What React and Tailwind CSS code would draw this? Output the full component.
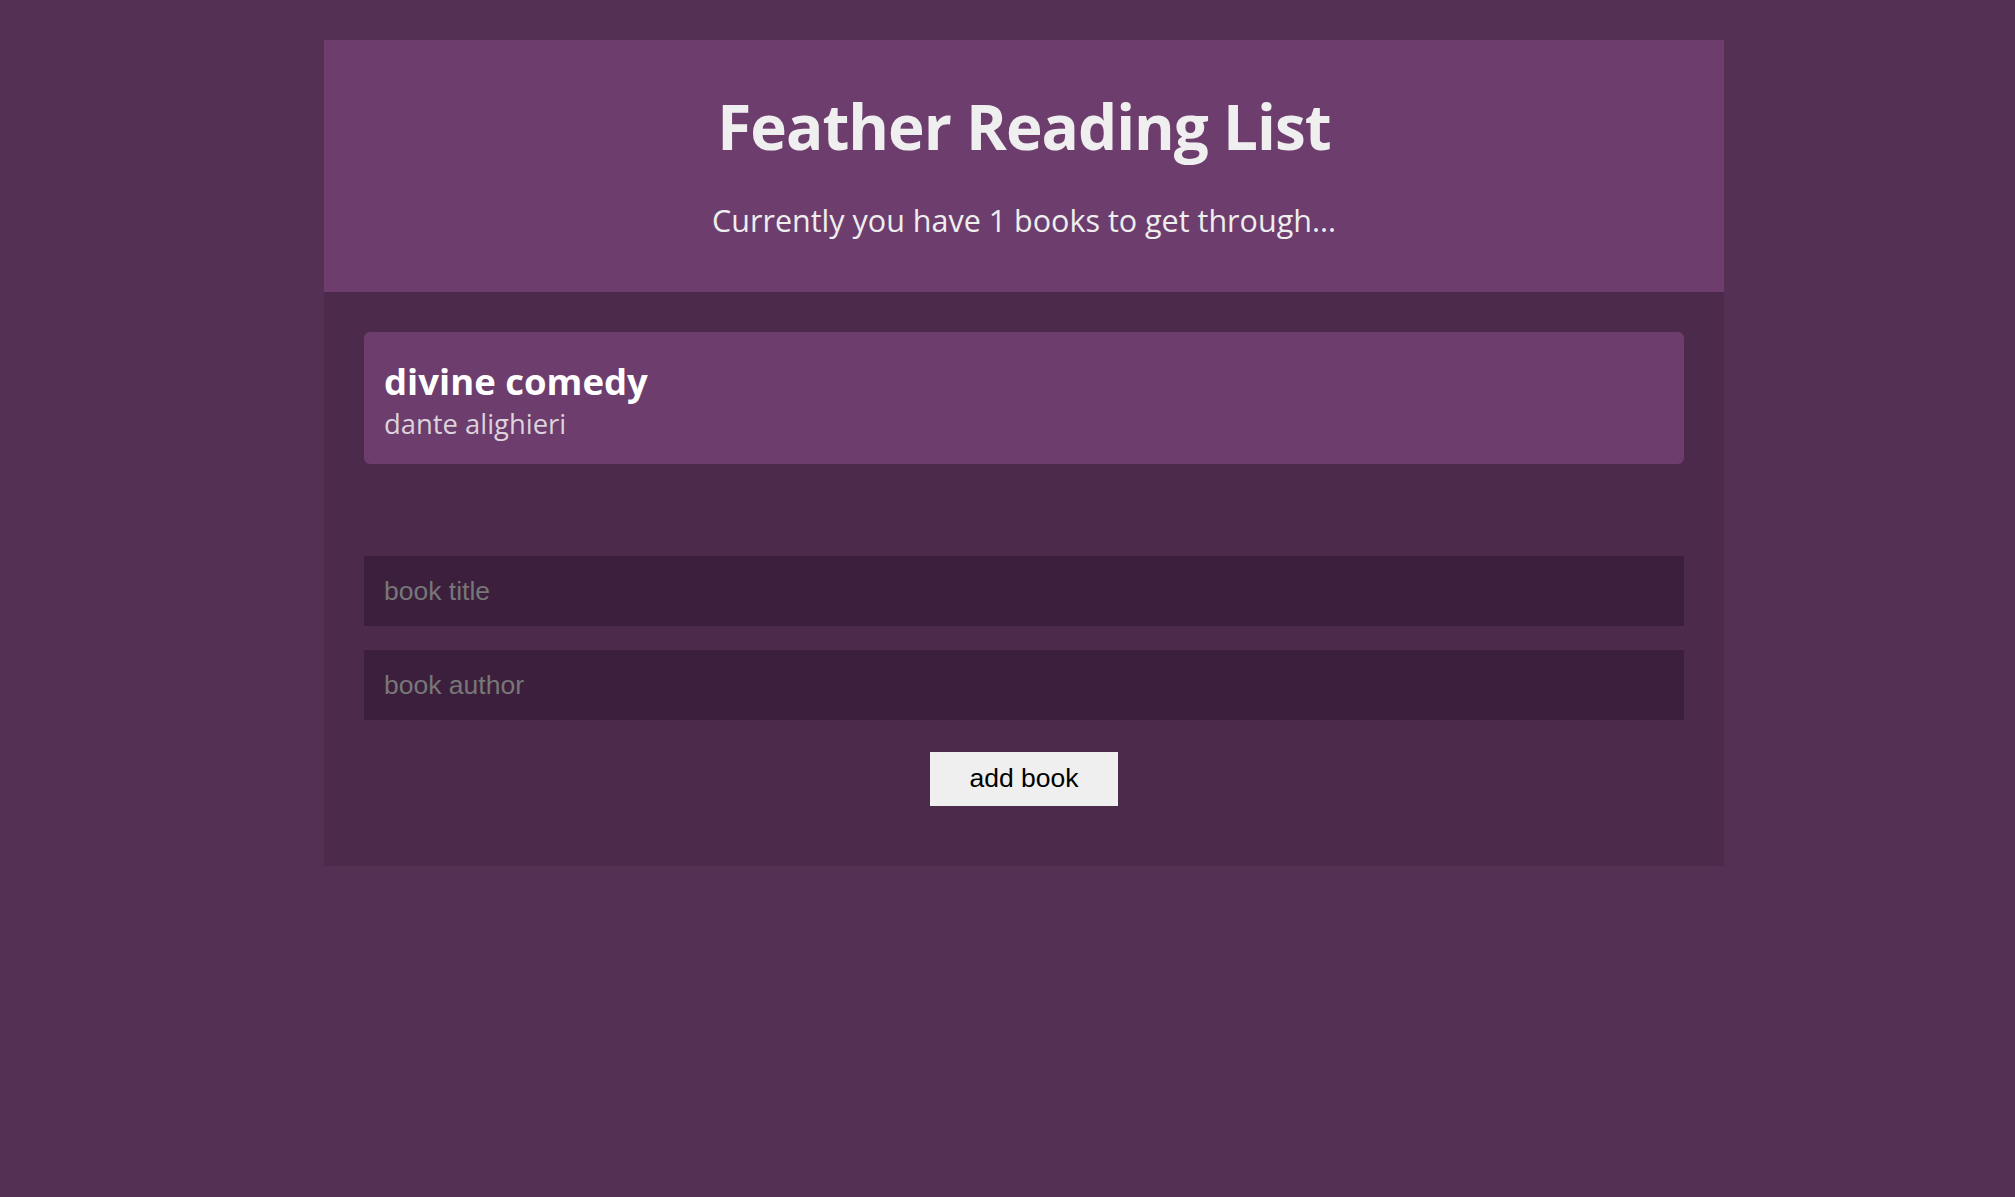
import React, { useState } from 'react';

const books = [{ title: 'divine comedy', author: 'dante alighieri' }];

const ReadingList = () => {
  const [title, setTitle] = useState('');
  const [author, setAuthor] = useState('');

  return (
    <div className="min-h-screen bg-[#533054] pt-[40px]" style={{ fontFamily: '"Open Sans", "Noto Sans", sans-serif' }}>
      <div className="ml-[324px] w-[1400px]">
        {/* Header */}
        <header className="flex h-[252px] flex-col items-center bg-[#6d3d6d] pt-[55px]">
          <h1 className="text-[62px] leading-[62px] font-bold tracking-[-1px] text-[#efefef]">Feather Reading List</h1>
          <p className="mt-[48px] text-[30.5px] leading-[30px] text-[#eeeeee]">
            Currently you have {books.length} books to get through...
          </p>
        </header>

        {/* Books + form */}
        <main className="bg-[#4b2a4b] px-[40px] pt-[40px] pb-[60px]">
          {books.map((b) => (
            <div key={b.title} className="h-[132px] rounded-[6px] bg-[#6d3d6d] px-[20px] pt-[27px]">
              <h2 className="text-[36.5px] leading-[44px] font-bold text-white">{b.title}</h2>
              <p className="text-[27.4px] leading-[41px] text-[#dcd3dc]">{b.author}</p>
            </div>
          ))}

          <div className="mt-[92px] flex flex-col gap-[24px]" style={{ fontFamily: '"Liberation Sans", Arial, sans-serif' }}>
            <input
              value={title}
              onChange={(e) => setTitle(e.target.value)}
              placeholder="book title"
              className="h-[70px] w-full bg-[#3c1f3d] px-[20px] text-[26.5px] text-white outline-none placeholder:text-[#777777]"
            />
            <input
              value={author}
              onChange={(e) => setAuthor(e.target.value)}
              placeholder="book author"
              className="h-[70px] w-full bg-[#3c1f3d] px-[20px] text-[26.5px] text-white outline-none placeholder:text-[#777777]"
            />
          </div>
          <div className="mt-[32px] flex justify-center" style={{ fontFamily: '"Liberation Sans", Arial, sans-serif' }}>
            <button className="h-[54px] w-[188px] bg-[#efefef] text-[26.5px] text-black">add book</button>
          </div>
        </main>
      </div>
    </div>
  );
};

export default function App() {
  return <ReadingList />;
}
